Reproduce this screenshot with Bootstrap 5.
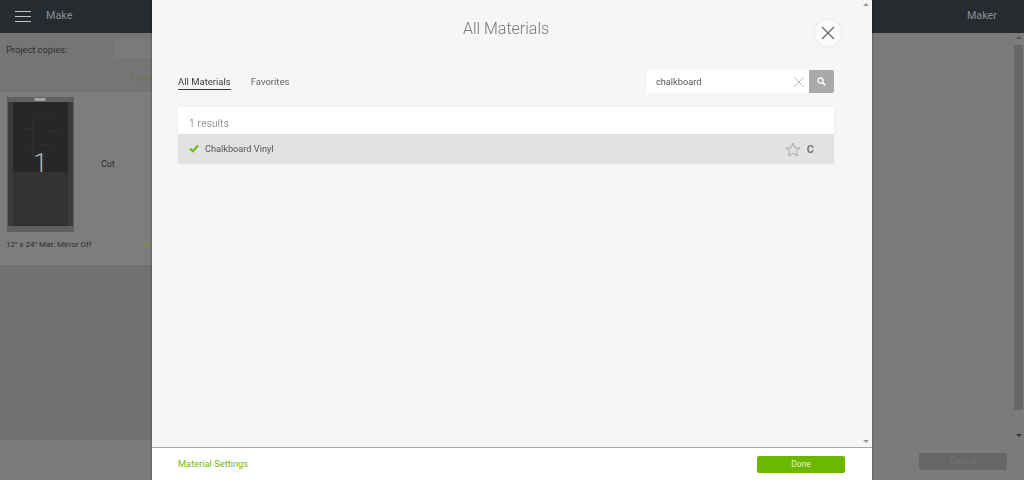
<!DOCTYPE html>
<html lang="en">
<head>
    <meta charset="UTF-8">
    <meta name="viewport" content="width=device-width, initial-scale=1.0">
    <title>All Materials</title>
    <link href="https://cdn.jsdelivr.net/npm/bootstrap@5.3.0/dist/css/bootstrap.min.css" rel="stylesheet">
    <style>
        html, body { height: 480px; overflow: hidden; }
        body { font-family: Roboto, "Liberation Sans", sans-serif; font-size: 9.3px; color: #555; background: #7a7a7a; }
        .app-shell { height: 480px; }
        .top-bar { height: 33px; background: #262b30; color: #8b8e90; padding: 0 27px 0 15px; font-size: 10.8px; }
        .menu-lines { width: 16px; height: 11px; border-top: 1px solid #c4c6c8; border-bottom: 1px solid #c4c6c8; position: relative; margin-right: 15px; }
        .menu-lines::after { content: ""; position: absolute; left: 0; right: 0; top: 4px; border-top: 1px solid #c4c6c8; }
        .work-area { min-height: 0; }
        .left-col { width: 152px; }
        .right-col { padding-right: 10px; }
        .copies-band { height: 59px; background: #757575; color: #2e2e2e; padding: 10px 6px 0; }
        .copies-text { white-space: nowrap; }
        .copies-input { width: 40px; height: 23px; margin: -6px 0 0 46px; background: #7a7a7a; border: 1px solid #727272; }
        .fav-label { margin: 11px 0 0 124px; color: #6a7350; white-space: nowrap; }
        .mat-band { height: 173px; background: #7d7d7d; padding: 5px 6px 0; }
        .mat-thumb { width: 67px; height: 135px; margin-left: 1px; background: #5f5f5f; padding: 5px 0 6px; position: relative; }
        .mat-knob { position: absolute; top: 1px; left: 27px; width: 12px; height: 3px; background: #a0a0a0; border-radius: 2px; }
        .mat-sheet { height: 100%; margin: 0 1px; background: linear-gradient(#272727 70px, #323232 70px); border-left: 5px solid #3b3b3b; border-right: 5px solid #3b3b3b; padding-top: 48px; color: #b0b0b0; font-size: 26px; font-weight: 300; line-height: 1; text-align: center; }
        .mat-art { position: absolute; top: 12px; left: 14px; }
        .cut-label { margin-left: 27px; color: #2b2b2b; font-size: 9px; }
        .mat-caption { color: #2e2e2e; font-size: 8px; margin-top: 7px; white-space: nowrap; }
        .edit-label { color: #7c9a2c; margin-left: 53px; }
        .rest-band { background: #717171; }
        .bottom-band { height: 40px; background: #7b7b7b; padding: 3px 17px 0 0; }
        .cancel-btn { width: 88px; height: 17px; background: #666; color: #777; font-size: 9px; border-radius: 2px; }
        .page-scroll { position: fixed; top: 33px; right: 0; width: 10px; height: 407px; background: #7c7c7c; }
        .page-thumb { position: absolute; top: 12px; left: 0; right: 1px; height: 365px; background: #676767; }
        .materials-modal { position: fixed; top: 0; left: 152px; width: 720px; height: 480px; background: #f6f6f7; box-shadow: 0 0 3px rgba(0, 0, 0, .35); }
        .modal-main { height: 448px; padding: 0 38px 0 26px; border-bottom: 1px solid #a9a9a9; position: relative; }
        .modal-heading { font-size: 16px; font-weight: 300; color: #777; text-align: center; padding-top: 19px; height: 70px; line-height: 19px; }
        .close-round { position: absolute; left: 663px; top: 20px; width: 26px; height: 26px; border-radius: 50%; background: #fbfbfb; box-shadow: 0 0 3px #ddd; }
        .tab-row { gap: 20px; margin-top: 1px; }
        .tab-link { font-size: 9.5px; color: #666; line-height: 13px; padding-bottom: 1px; }
        .tab-link.is-active { color: #3c3c3c; border-bottom: 1px solid #333; }
        .tab-plain { border-bottom: 1px solid transparent; }
        .search-box { width: 187px; height: 23px; }
        .search-field { background: #fff; padding: 0 5px 0 9px; color: #555; font-size: 9.2px; }
        .search-go { width: 25px; background: #a9a9a9; border-radius: 0 2px 2px 0; }
        .results-card { margin-top: 14px; background: #fff; box-shadow: 0 0 2px #e4e4e4; border-radius: 2px; }
        .results-count { height: 27px; padding: 5px 0 0 11px; font-size: 10px; font-weight: 300; color: #666; letter-spacing: .3px; }
        .result-row { height: 30px; background: #e2e2e2; padding: 0 20px 0 11px; color: #555; font-size: 9.2px; }
        .result-name { margin-left: 6px; }
        .c-mark { font-size: 11px; font-weight: 700; color: #777; margin: 3px 0 0 6px; }
        .modal-scroll { position: absolute; top: 0; right: 0; width: 12px; height: 446px; }
        .scroll-arrow { position: absolute; left: 3px; width: 0; height: 0; border-left: 3px solid transparent; border-right: 3px solid transparent; }
        .scroll-up { top: 3px; border-bottom: 3px solid #999; }
        .scroll-down { bottom: 3px; border-top: 3px solid #999; }
        .page-scroll .scroll-up { border-bottom-color: #555; top: 3px; left: 2px; }
        .page-scroll .scroll-down { border-top-color: #333; bottom: 3px; left: 2px; }
        .modal-foot { height: 32px; background: #fff; padding: 0 27px 0 26px; }
        .settings-link { color: #7ab800; font-size: 9.3px; }
        .done-btn { width: 88px; height: 17px; background: #6cb800; color: #e6f3cc; font-size: 8.5px; border-radius: 2px; }
    </style>
</head>
<body>
    <div class="app-shell d-flex flex-column">
        <div class="top-bar d-flex align-items-center justify-content-between flex-shrink-0">
            <div class="d-flex align-items-center"><span class="menu-lines"></span><span>Make</span></div>
            <span>Maker</span>
        </div>
        <div class="work-area d-flex flex-grow-1">
            <div class="left-col d-flex flex-column flex-shrink-0">
                <div class="copies-band flex-shrink-0">
                    <div class="d-flex align-items-start">
                        <span class="copies-text">Project copies:</span>
                        <span class="copies-input flex-shrink-0"></span>
                    </div>
                    <div class="fav-label">Favorites</div>
                </div>
                <div class="mat-band flex-shrink-0">
                    <div class="d-flex align-items-center">
                        <div class="mat-thumb">
                            <span class="mat-knob"></span>
                            <div class="mat-sheet">1</div>
                            <svg class="mat-art" width="40" height="55" viewBox="0 0 40 55"><path d="M12 8V50M2 20H10M22 8H32M26 22H38M20 36H30M4 38H9" stroke="#343434" fill="none"/></svg>
                        </div>
                        <span class="cut-label">Cut</span>
                    </div>
                    <div class="mat-caption">12" x 24" Mat: Mirror Off<span class="edit-label">Edit</span></div>
                </div>
                <div class="rest-band flex-grow-1"></div>
            </div>
            <div class="right-col flex-grow-1"></div>
        </div>
        <div class="bottom-band d-flex align-items-center justify-content-end flex-shrink-0">
            <span class="cancel-btn d-flex align-items-center justify-content-center">Cancel</span>
        </div>
    </div>
    <div class="page-scroll">
        <span class="scroll-arrow scroll-up"></span>
        <span class="page-thumb"></span>
        <span class="scroll-arrow scroll-down"></span>
    </div>

    <div class="materials-modal">
        <div class="modal-main">
            <div class="modal-heading">All Materials</div>
            <div class="close-round d-flex align-items-center justify-content-center">
                <svg width="14" height="14" viewBox="0 0 14 14"><path d="M1 1L13 13M13 1L1 13" stroke="#666" stroke-width="1.2" fill="none"/></svg>
            </div>
            <div class="d-flex align-items-center justify-content-between">
                <div class="tab-row d-flex">
                    <span class="tab-link is-active">All Materials</span>
                    <span class="tab-link tab-plain">Favorites</span>
                </div>
                <div class="search-box d-flex">
                    <div class="search-field flex-grow-1 d-flex align-items-center justify-content-between">
                        <span>chalkboard</span>
                        <svg width="10" height="10" viewBox="0 0 10 10"><path d="M0 0L10 10M10 0L0 10" stroke="#bbb" stroke-width="1" fill="none"/></svg>
                    </div>
                    <div class="search-go d-flex align-items-center justify-content-center">
                        <svg width="9" height="9" viewBox="0 0 9 9"><circle cx="3.6" cy="3.6" r="2.6" stroke="#fff" stroke-width="1.3" fill="none"/><path d="M5.6 5.6L8.4 8.4" stroke="#fff" stroke-width="1.6"/></svg>
                    </div>
                </div>
            </div>
            <div class="results-card">
                <div class="results-count d-flex align-items-center">1 results</div>
                <div class="result-row d-flex align-items-center justify-content-between">
                    <div class="d-flex align-items-center">
                        <svg width="10" height="9" viewBox="0 0 10 9"><path d="M1 4.5L3.8 7.2L9 1.5" stroke="#6cb800" stroke-width="2" fill="none"/></svg>
                        <span class="result-name">Chalkboard Vinyl</span>
                    </div>
                    <div class="d-flex align-items-center">
                        <svg width="16" height="15" viewBox="0 0 16 15"><path d="M8 1L10 5.8L15 6.1L11.2 9.3L12.4 14L8 11.4L3.6 14L4.8 9.3L1 6.1L6 5.8Z" stroke="#aaa" fill="none"/></svg>
                        <span class="c-mark">C</span>
                    </div>
                </div>
            </div>
            <div class="modal-scroll">
                <span class="scroll-arrow scroll-up"></span>
                <span class="scroll-arrow scroll-down"></span>
            </div>
        </div>
        <div class="modal-foot d-flex align-items-center justify-content-between">
            <span class="settings-link">Material Settings</span>
            <span class="done-btn d-flex align-items-center justify-content-center">Done</span>
        </div>
    </div>
</body>
</html>
